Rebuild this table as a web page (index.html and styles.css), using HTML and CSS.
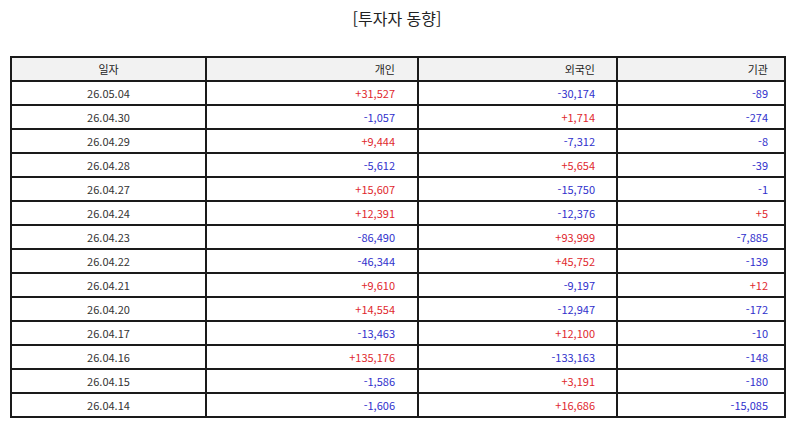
FILE: index.html
```html
<!DOCTYPE html>
<html lang="ko">
<head>
<meta charset="utf-8">
<link rel="stylesheet" href="styles.css">
</head>
<body>
<h1 class="title">[투자자 동향]</h1>
<table class="flow">
<colgroup>
<col class="c-date"><col class="c-ind"><col class="c-for"><col class="c-inst">
</colgroup>
<thead>
<tr><th class="date">일자</th><th class="ind">개인</th><th class="for">외국인</th><th class="inst">기관</th></tr>
</thead>
<tbody>
<tr><td class="date">26.05.04</td><td class="ind up">+31,527</td><td class="for down">-30,174</td><td class="inst down">-89</td></tr>
<tr><td class="date">26.04.30</td><td class="ind down">-1,057</td><td class="for up">+1,714</td><td class="inst down">-274</td></tr>
<tr><td class="date">26.04.29</td><td class="ind up">+9,444</td><td class="for down">-7,312</td><td class="inst down">-8</td></tr>
<tr><td class="date">26.04.28</td><td class="ind down">-5,612</td><td class="for up">+5,654</td><td class="inst down">-39</td></tr>
<tr><td class="date">26.04.27</td><td class="ind up">+15,607</td><td class="for down">-15,750</td><td class="inst down">-1</td></tr>
<tr><td class="date">26.04.24</td><td class="ind up">+12,391</td><td class="for down">-12,376</td><td class="inst up">+5</td></tr>
<tr><td class="date">26.04.23</td><td class="ind down">-86,490</td><td class="for up">+93,999</td><td class="inst down">-7,885</td></tr>
<tr><td class="date">26.04.22</td><td class="ind down">-46,344</td><td class="for up">+45,752</td><td class="inst down">-139</td></tr>
<tr><td class="date">26.04.21</td><td class="ind up">+9,610</td><td class="for down">-9,197</td><td class="inst up">+12</td></tr>
<tr><td class="date">26.04.20</td><td class="ind up">+14,554</td><td class="for down">-12,947</td><td class="inst down">-172</td></tr>
<tr><td class="date">26.04.17</td><td class="ind down">-13,463</td><td class="for up">+12,100</td><td class="inst down">-10</td></tr>
<tr><td class="date">26.04.16</td><td class="ind up">+135,176</td><td class="for down">-133,163</td><td class="inst down">-148</td></tr>
<tr><td class="date">26.04.15</td><td class="ind down">-1,586</td><td class="for up">+3,191</td><td class="inst down">-180</td></tr>
<tr><td class="date">26.04.14</td><td class="ind down">-1,606</td><td class="for up">+16,686</td><td class="inst down">-15,085</td></tr>
</tbody>
</table>
</body>
</html>
```
FILE: styles.css
```css
html, body {
  margin: 0;
  padding: 0;
  background: #fff;
}
body {
  font-family: "Noto Sans CJK KR", "Noto Sans", sans-serif;
  color: #333;
}
.title {
  margin: 0;
  padding-top: 6px;
  height: 56px;
  box-sizing: border-box;
  font-size: 16px;
  font-weight: normal;
  line-height: 24px;
  text-align: center;
  color: #222;
}
.flow {
  margin-left: 10px;
  width: 774px;
  border-collapse: collapse;
  table-layout: fixed;
  font-size: 11px;
}
.c-date { width: 195px; }
.c-ind { width: 212px; }
.c-for { width: 199px; }
.c-inst { width: 168px; }
.flow th, .flow td {
  border: 2px solid #1a1a1a;
  height: 22px;
  padding: 0;
  line-height: 14px;
  font-weight: normal;
  color: #333;
}
.flow th {
  background: #f2f2f2;
  color: #222;
}
.flow .date { text-align: center; }
.flow .ind { text-align: right; padding-right: 22px; }
.flow .for { text-align: right; padding-right: 21px; }
.flow .inst { text-align: right; padding-right: 16px; }
.flow .up { color: #e0282e; }
.flow .down { color: #3030cc; }
```
